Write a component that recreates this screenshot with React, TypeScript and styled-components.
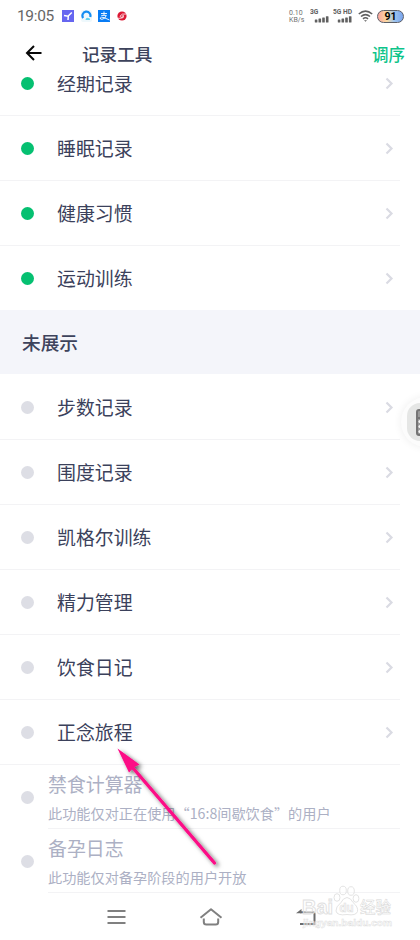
import React from 'react';
import styled, { createGlobalStyle } from 'styled-components';

const GlobalStyle = createGlobalStyle`
  * { box-sizing: border-box; }
  body {
    margin: 0;
    background: #fff;
    font-family: "Noto Sans CJK SC", "Noto Sans", sans-serif;
  }
`;

const Screen = styled.div`
  position: relative;
  display: flex;
  flex-direction: column;
  width: 420px;
  height: 940px;
  overflow: hidden;
  background: #fff;
`;

const StatusBar = styled.div`
  display: flex;
  justify-content: space-between;
  align-items: center;
  flex: none;
  height: 32px;
  padding: 0 16px 0 17px;
`;

const StatusGroup = styled.div`
  display: flex;
  align-items: center;
  height: 32px;
`;

const Clock = styled.span`
  width: 45px;
  font: 400 15.5px/32px Roboto, sans-serif;
  letter-spacing: -0.35px;
  color: #666;
`;

const NetSpeed = styled.div`
  display: flex;
  flex-direction: column;
  width: 19px;
  padding-top: 1px;
  font: 400 7px/7px Roboto, sans-serif;
  color: #707070;
  white-space: nowrap;
`;

const Battery = styled.div`
  width: 27px;
  height: 13px;
  margin-left: 4px;
  border: 1px solid #5c5f68;
  border-radius: 7px;
  background: linear-gradient(90deg, #f9a7a0 0%, #fbd9a0 35%, #9dc4ee 65%, #7aa5ee 100%);
  font: 700 10.5px/11px Roboto, sans-serif;
  text-align: center;
  color: #000;
`;

const Header = styled.div`
  display: flex;
  align-items: center;
  flex: none;
  height: 44px;
  padding: 0 15px 0 25px;
  background: #fff;
`;

const Title = styled.h1`
  flex: 1;
  margin: 0 0 0 40px;
  font-size: 17.6px;
  font-weight: 500;
  line-height: 44px;
  color: #3d435c;
`;

const SortButton = styled.button`
  padding: 0;
  border: 0;
  background: none;
  font: 500 16.5px/44px "Noto Sans CJK SC", sans-serif;
  color: #0dc48a;
`;

const ListViewport = styled.div`
  display: flex;
  flex-direction: column;
  justify-content: flex-end;
  flex: none;
  height: 817px;
  overflow: hidden;
`;

const Row = styled.div`
  display: flex;
  align-items: center;
  flex: none;
  width: 400px;
  height: 65px;
  padding: 0 6px 0 21px;
  border-bottom: 1.5px solid #f3f3f5;
`;

const Dot = styled.span<{ $on?: boolean }>`
  flex: none;
  width: 13px;
  height: 13px;
  border-radius: 50%;
  background: ${(p) => (p.$on ? '#05c071' : '#dddee5')};
`;

const Label = styled.span`
  flex: 1;
  margin: -1px 0 0 23px;
  font-size: 18.9px;
  line-height: 28px;
  color: #3b415b;
`;

const SectionTitle = styled.h2`
  flex: none;
  height: 64px;
  margin: -1px 0 1px;
  padding-left: 22px;
  background: #f4f5fa;
  font-size: 18.7px;
  font-weight: 500;
  line-height: 64px;
  color: #3d435c;
`;

const LockedRow = styled.div`
  display: flex;
  align-items: center;
  flex: none;
  width: 400px;
  height: 64px;
  padding-left: 21px;
`;

const LockedBody = styled.div`
  flex: 1;
  height: 64px;
  margin-left: 14px;
  padding-top: 5px;
  border-bottom: 1.5px solid #f3f3f5;
  color: #acb0c4;
  white-space: nowrap;
`;

const LockedName = styled.div`
  font-size: 18.9px;
  line-height: 28px;
`;

const LockedHint = styled.div`
  font-size: 14.18px;
  line-height: 30px;
`;

const NavBar = styled.div`
  display: flex;
  align-items: center;
  justify-content: space-between;
  flex: 1;
  padding: 0 104px 0 107px;
`;

const FloatingButton = styled.div`
  position: absolute;
  top: 397px;
  left: 400.5px;
  width: 50px;
  height: 50px;
  padding: 6px;
  border-radius: 50%;
  background: #fcfcfc;
  box-shadow: 0 0 9px rgba(0, 0, 0, 0.07);
`;

const FloatingFace = styled.div`
  display: flex;
  align-items: center;
  height: 38px;
  padding-left: 9px;
  border-radius: 13px;
  background: #e5e6e5;
`;

const ArrowOverlay = styled.svg`
  position: absolute;
  left: 105px;
  top: 738px;
`;

const Watermark = styled.svg`
  position: absolute;
  left: 300px;
  top: 882px;
`;

const Icon = styled.svg<{ $ml?: number; $mt?: number }>`
  display: block;
  flex: none;
  margin-left: ${(p) => p.$ml ?? 0}px;
  margin-top: ${(p) => p.$mt ?? 0}px;
`;

const Chevron = () => (
  <Icon width="9" height="13" viewBox="0 0 9 13" fill="none" stroke="#dadbe3" strokeWidth="2.2">
    <path d="M1.5 1.5 6.5 6.5 1.5 11.5" />
  </Icon>
);

const Signal = ({ label, ml, offset }: { label: string; ml: number; offset: number }) => (
  <Icon $ml={ml} width="21" height="18" viewBox="0 0 21 18" fill="#606060">
    <text x="0" y="7.2" fontFamily="Roboto" fontWeight="700" fontSize="6.7">{label}</text>
    {[3, 3.9, 5, 6.2].map((h, i) => (
      <rect key={i} x={offset + i * 3.7} y={15.4 - h} width="2.6" height={h} rx="0.5" />
    ))}
  </Icon>
);

const shown = ['经期记录', '睡眠记录', '健康习惯', '运动训练'];
const hidden = ['步数记录', '围度记录', '凯格尔训练', '精力管理', '饮食日记', '正念旅程'];
const locked = [
  { name: '禁食计算器', hint: '此功能仅对正在使用“16:8间歇饮食”的用户' },
  { name: '备孕日志', hint: '此功能仅对备孕阶段的用户开放' },
];

const ToolRow = ({ name, on }: { name: string; on?: boolean }) => (
  <Row>
    <Dot $on={on} />
    <Label>{name}</Label>
    <Chevron />
  </Row>
);

export default function App() {
  return (
    <>
      <GlobalStyle />
      <Screen>
        <StatusBar>
          <StatusGroup>
            <Clock>19:05</Clock>
            <Icon width="12" height="12" viewBox="0 0 12 12">
              <rect width="12" height="12" fill="#6666f0" />
              <path d="M2 5.5 6 6.2 9.8 2.5M6.3 6 6 10" fill="none" stroke="#fff" strokeWidth="1.5" />
            </Icon>
            <Icon $ml={7} width="11" height="12" viewBox="0 0 11 12">
              <rect width="11" height="12" rx="2" fill="#eef8fc" />
              <path d="M2.2 8A4 4 0 1 1 9.2 7" fill="none" stroke="#138df2" strokeWidth="2.2" />
              <path d="M4.5 9.5q1-2.5 2.6-1.4Q9.5 8 9 10H4.8z" fill="#5ed2ee" />
            </Icon>
            <Icon $ml={6} width="12" height="12" viewBox="0 0 12 12">
              <rect width="12" height="12" fill="#087cf4" />
              <path d="M3 3.5h6M6 1.5V5M3.3 5.4h5Q7.3 9 4 9.3 2 9.4 2.2 8q.8-1.4 3.8-.4L11.5 10" fill="none" stroke="#fff" strokeWidth=".9" />
            </Icon>
            <Icon $ml={7} width="10" height="10" viewBox="0 0 10 10">
              <circle cx="5" cy="5" r="4.6" fill="#dc1834" />
              <path d="M9.3 3Q4.5 2.2 3 5.2 3 6.5 5.1 6.3L7 4.9H4.9M.7 7.2Q3 7.8 6.5 6.5" fill="none" stroke="#fff" strokeWidth=".8" />
            </Icon>
          </StatusGroup>
          <StatusGroup>
            <NetSpeed>
              <span>0.10</span>
              <span>KB/s</span>
            </NetSpeed>
            <Signal label="3G" ml={2} offset={4.8} />
            <Signal label="5G HD" ml={2} offset={4.8} />
            <Icon $ml={4} width="15" height="12" viewBox="0 0 15 12" fill="none" stroke="#606060" strokeWidth="1.6">
              <path d="M.8 4Q7.5-1.7 14.2 4M3 6.5q4.5-3.8 9 0M5 8.8q2.5-2 5 0" />
              <path d="M6 10.2h3L7.5 11.8z" fill="#606060" stroke="none" />
            </Icon>
            <Battery>91</Battery>
          </StatusGroup>
        </StatusBar>
        <Header>
          <Icon width="17" height="16" viewBox="0 0 17 16" fill="none" stroke="#080808" strokeWidth="2" $mt={-2}>
            <path d="M16.5 8H2.2M9 1 2 8l7 7" />
          </Icon>
          <Title>记录工具</Title>
          <SortButton>调序</SortButton>
        </Header>
        <ListViewport>
          {shown.map((n) => <ToolRow key={n} name={n} on />)}
          <SectionTitle>未展示</SectionTitle>
          {hidden.map((n) => <ToolRow key={n} name={n} />)}
          {locked.map((item) => (
            <LockedRow key={item.name}>
              <Dot />
              <LockedBody>
                <LockedName>{item.name}</LockedName>
                <LockedHint>{item.hint}</LockedHint>
              </LockedBody>
            </LockedRow>
          ))}
        </ListViewport>
        <NavBar>
          <Icon width="19" height="16" viewBox="0 0 19 16" stroke="#808080" strokeWidth="2.2">
            <path d="M.5 2h18M.5 8h18M.5 14h18" />
          </Icon>
          <Icon width="24" height="18" viewBox="0 0 24 18" fill="none" stroke="#808080" strokeWidth="2" strokeLinejoin="round">
            <path d="M1.5 9.8 12 1.3 22.5 9.8M4.8 10.5V14q0 2.5 2.5 2.5h9.4q2.5 0 2.5-2.5v-3.5" />
          </Icon>
          <Icon width="20" height="18" viewBox="0 0 20 18" fill="none" stroke="#6c6c6c" strokeWidth="2">
            <path d="M4 4.2h13Q18.5 4.2 18.5 6V16H4" />
            <path d="M0 5.2 5.5 1v4.2z" fill="#6c6c6c" stroke="none" />
          </Icon>
        </NavBar>

        <FloatingButton>
          <FloatingFace>
            <Icon width="20" height="27" viewBox="0 0 20 27">
              <rect x="1" y="1" width="20" height="25" rx="2" fill="#999" stroke="#747474" strokeWidth="2" />
              <path d="M2 9h18" stroke="#747474" strokeWidth="2" />
              <g fill="#f5f5f5">
                <circle cx="4" cy="12.5" r="1.6" />
                <circle cx="4" cy="17.5" r="1.6" />
                <circle cx="4" cy="22.5" r="1.6" />
              </g>
            </Icon>
          </FloatingFace>
        </FloatingButton>

        <ArrowOverlay width="125" height="140" viewBox="105 738 125 140">
          <defs>
            <filter id="shade" x="-20%" y="-20%" width="150%" height="150%">
              <feDropShadow dx="2.5" dy="2" stdDeviation="2" floodColor="#000" floodOpacity=".6" />
            </filter>
          </defs>
          <g filter="url(#shade)">
            <path d="M133 768 214.5 863" stroke="#fc0886" strokeWidth="3.3" strokeLinecap="round" />
            <path d="M117.5 748.5 139.5 764.5 133.5 767.5 129 772.5z" fill="#fc0886" />
          </g>
        </ArrowOverlay>

        <Watermark width="100" height="52" viewBox="300 882 100 52" fill="#fff" fillOpacity=".45" stroke="#e0e0e0" strokeWidth=".9">
          <text x="302" y="914" fontFamily="Liberation Sans" fontWeight="700" fontSize="20" textLength="31" lengthAdjust="spacingAndGlyphs">Bai</text>
          <ellipse cx="337" cy="897.5" rx="3" ry="3.8" />
          <ellipse cx="343" cy="890.5" rx="3.3" ry="4.3" />
          <ellipse cx="351" cy="891" rx="3.3" ry="4.3" />
          <ellipse cx="356" cy="898.5" rx="2.9" ry="3.8" />
          <path d="M347 897.5Q351 898 353 902.5 358.500 907 357.5 911.5 356 916 347 914.5 337 916 336 911 335.5 907 341 902.5 343 898 347 897.5z" />
          <text x="339.5" y="912" fontFamily="Liberation Sans" fontWeight="700" fontSize="12" textLength="14" lengthAdjust="spacingAndGlyphs" strokeWidth=".7">du</text>
          <text x="360" y="912.5" fontFamily="Noto Sans CJK SC" fontWeight="500" fontSize="15.5" strokeWidth=".5" stroke="#d6d6d6">经验</text>
          <text x="303" y="925.5" fontFamily="Liberation Sans" fontWeight="700" fontSize="9.8" textLength="89" lengthAdjust="spacingAndGlyphs" strokeWidth=".5">jingyan.baidu.com</text>
        </Watermark>
      </Screen>
    </>
  );
}
